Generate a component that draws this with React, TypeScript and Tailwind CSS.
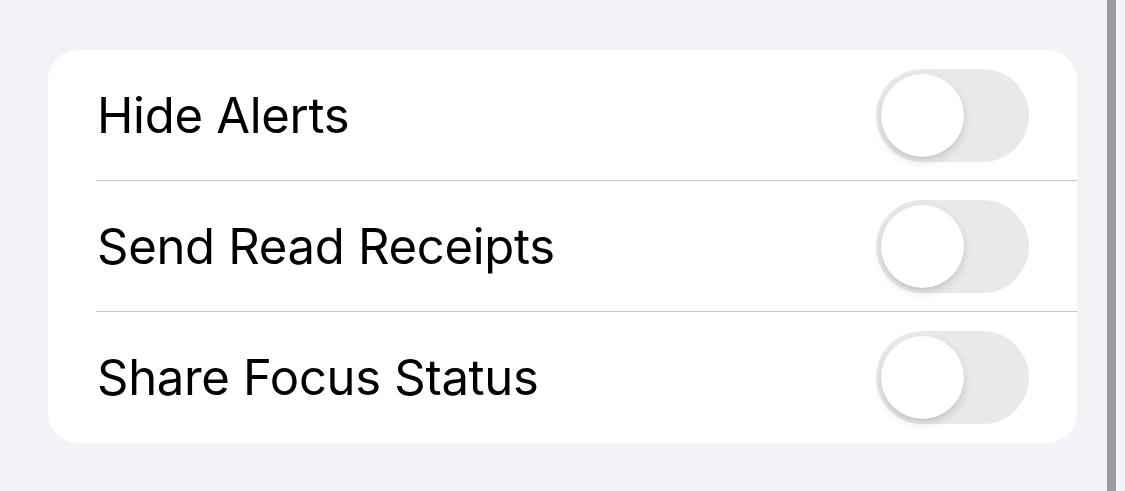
export default function App() {
  const rows = ["Hide Alerts", "Send Read Receipts", "Share Focus Status"]

  const Toggle = () => (
    <div className="relative w-[153px] h-[93px] rounded-full bg-[#e9e9eb] shrink-0">
      <div className="absolute left-[5px] top-[5px] w-[83px] h-[83px] rounded-full bg-white shadow-[0_4px_10px_rgba(0,0,0,0.14),0_1px_2px_rgba(0,0,0,0.06)]"></div>
    </div>
  )

  return (
    <div
      className="w-[1125px] h-[491px] bg-[#f2f2f7] flex overflow-hidden"
      style={{ fontFamily: "Inter, 'Noto Sans', sans-serif" }}
    >
      <div className="w-[1107px] pt-[50px] pl-[48px] pr-[30px]">
        <div className="bg-white rounded-[30px] overflow-hidden">
          {rows.map((label, i) => (
            <div key={label} className="pl-[48px]">
              <div
                className={`h-[131px] flex items-center justify-between pr-[48px] ${
                  i < rows.length - 1 ? "border-b border-[#c6c6c8]" : ""
                }`}
              >
                <span className="text-[49px] leading-none text-black tracking-[-0.3px] ml-[1px]">{label}</span>
                <Toggle />
              </div>
            </div>
          ))}
        </div>
      </div>
      <div className="w-[9px] h-full bg-[#9c9ba0]"></div>
    </div>
  )
}
